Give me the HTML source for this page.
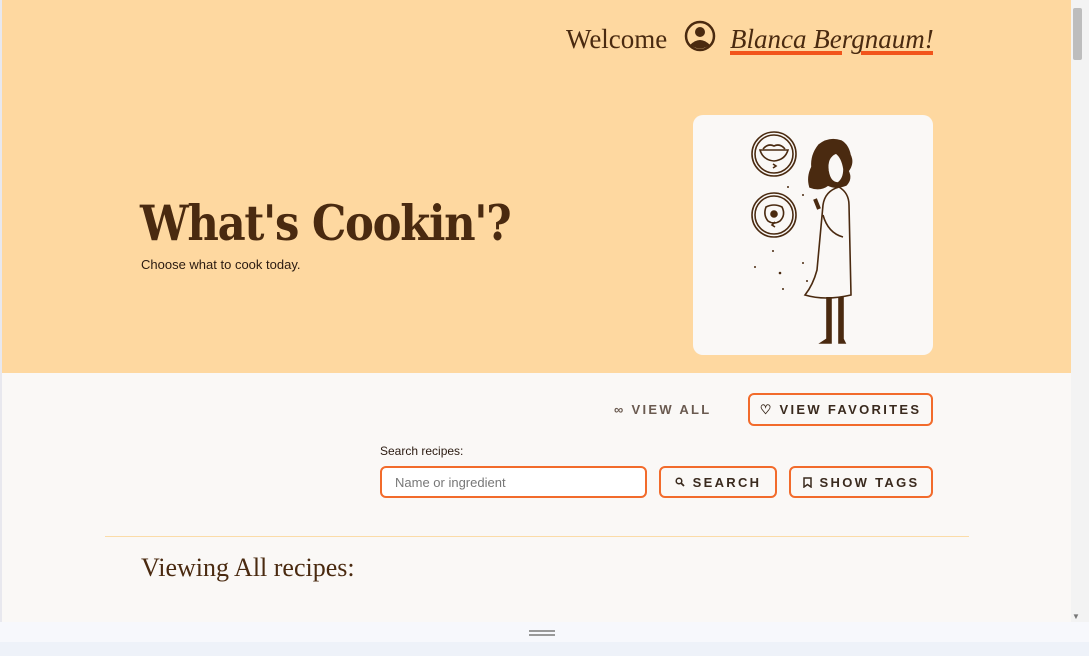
<!DOCTYPE html>
<html><head><style>
*{margin:0;padding:0;box-sizing:border-box}
body{width:1089px;height:656px;overflow:hidden;background:#eef2f9;font-family:"Liberation Sans",sans-serif;position:relative}
.page{position:absolute;left:0;top:0;width:1071px;height:622px;background:#faf8f6;border-left:2px solid #e8e8ee}
.hero{position:absolute;left:2px;top:0;width:1069px;height:373px;background:#fed8a0}
.sb{position:absolute;left:1071px;top:0;width:18px;height:622px;background:#f3f3f3}
.thumb{position:absolute;left:1073px;top:8px;width:9px;height:52px;background:#bdbdbd;border-radius:2px}
.abs{position:absolute;white-space:nowrap}
.serif{font-family:"DejaVu Serif","Liberation Serif",serif;color:#4a2a10}
.btn{position:absolute;border:2px solid #f26b2b;border-radius:6px;font-weight:bold;font-size:13px;letter-spacing:2.3px;color:#3a2a1e;display:flex;align-items:center;justify-content:center;gap:8px}
</style></head><body>
<div class="page"></div>
<div class="hero"></div>
<div class="sb"></div><div class="thumb"></div>
<div class="abs" style="left:1072px;top:612px;font-size:8px;color:#777">▼</div>
<div class="abs serif" style="left:566px;top:24px;font-family:'Liberation Serif',serif;font-size:27px">Welcome</div>
<svg class="abs" style="left:684px;top:20px" width="32" height="32" viewBox="0 0 32 32"><circle cx="16" cy="16" r="14" fill="none" stroke="#4a2a10" stroke-width="2.5"/><circle cx="16" cy="12" r="5" fill="#4a2a10"/><path d="M6 25 Q16 15 26 25 Q16 32 6 25Z" fill="#4a2a10"/></svg>
<div class="abs" style="left:730px;top:24px;font-family:'Liberation Serif',serif;font-style:italic;font-size:27px;color:#4a2a10">Blanca Bergnaum!</div>
<div class="abs" style="left:730px;top:51px;width:112px;height:4px;background:#f2541b"></div>
<div class="abs" style="left:861px;top:51px;width:72px;height:4px;background:#f2541b"></div>
<div class="abs serif" style="left:140px;top:194px;font-size:49px;font-weight:bold;letter-spacing:-1.5px;transform:scaleX(0.885);transform-origin:0 0">What's Cookin'?</div>
<div class="abs" style="left:141px;top:257px;font-size:13px;color:#2a1a10">Choose what to cook today.</div>
<div class="abs" style="left:693px;top:115px;width:240px;height:240px;background:#faf8f6;border-radius:10px"></div>
<svg class="abs" style="left:693px;top:115px" width="240" height="240" viewBox="0 0 240 240" fill="none" stroke="#4a2a10" stroke-width="1.6">
<circle cx="81" cy="39" r="22"/><circle cx="81" cy="39" r="19"/>
<path d="M67 35 h28 q-3 10 -14 11 q-11 -1 -14 -11z"/><path d="M70 34 q5 -6 11 -3 q6 -3 11 3"/><path d="M80 49 l3 2 -3 2"/>
<circle cx="81" cy="100" r="22"/><circle cx="81" cy="100" r="19"/>
<path d="M73 92 q8 -4 16 0 q4 8 -2 14 q-6 4 -12 0 q-5 -6 -2 -14z"/><circle cx="81" cy="99" r="3" fill="#4a2a10"/><path d="M82 107 l-3 3 3 2"/>
<path d="M148 26 q-12 -4 -22 4 q-8 10 -7 22 q-5 10 -2 20 q10 4 18 -2 q8 4 18 0 q6 -6 2 -14 q6 -8 2 -16 q-2 -10 -9 -14z" fill="#4a2a10"/>
<path d="M143 38 q-10 4 -8 18 q2 12 10 12 q6 -4 6 -14 q-2 -12 -8 -16z" fill="#faf8f6"/>
<path d="M146 72 q-14 4 -16 18 l-6 65 q-4 15 -12 25 q20 6 46 0 l-2 -90 q0 -12 -10 -18z" fill="#faf8f6"/>
<path d="M130 100 q5 18 20 22"/><path d="M122 84 l4 10" stroke-width="4"/>
<path d="M134 182 l0 42 l-6 4 h10 l0 -46 M150 182 l0 42 l2 4 h-6 l0 -46" fill="#4a2a10"/>
<g fill="#4a2a10" stroke="none"><circle cx="95" cy="72" r="1"/><circle cx="110" cy="80" r="1"/><circle cx="80" cy="136" r="1"/><circle cx="62" cy="152" r="1"/><circle cx="87" cy="158" r="1.3"/><circle cx="110" cy="148" r="1"/><circle cx="90" cy="174" r="1"/><circle cx="114" cy="166" r="1"/></g>
</svg>
<div class="abs" style="left:614px;top:402px;font-size:13px;font-weight:bold;letter-spacing:2.3px;color:#6a5a50">∞ VIEW ALL</div>
<div class="btn" style="left:748px;top:393px;width:185px;height:33px">♡ VIEW FAVORITES</div>
<div class="abs" style="left:380px;top:444px;font-size:12px;color:#2a1a10">Search recipes:</div>
<div class="abs" style="left:380px;top:466px;width:267px;height:32px;border:2px solid #f26b2b;border-radius:6px;background:#fff;font-size:13px;color:#777;padding:7px 13px">Name or ingredient</div>
<div class="btn" style="left:659px;top:466px;width:118px;height:32px"><svg width="10" height="10" viewBox="0 0 10 10"><circle cx="4" cy="4" r="2.8" fill="none" stroke="#3a2a1e" stroke-width="1.5"/><path d="M6 6l3 3" stroke="#3a2a1e" stroke-width="1.8"/></svg>SEARCH</div>
<div class="btn" style="left:789px;top:466px;width:144px;height:32px"><svg width="9" height="11"><path d="M1 1h7v9l-3.5-2.5L1 10z" fill="none" stroke="#3a2a1e" stroke-width="1.5"/></svg>SHOW TAGS</div>
<div class="abs" style="left:105px;top:536px;width:864px;height:1px;background:#fbdca8"></div>
<div class="abs" style="left:141px;top:553px;font-family:'Liberation Serif',serif;font-size:26px;color:#4a2a10">Viewing All recipes:</div>
<div class="abs" style="left:0;top:622px;width:1089px;height:20px;background:#f7f8fc"></div>
<div class="abs" style="left:529px;top:630px;width:26px;height:2px;background:#999"></div>
<div class="abs" style="left:529px;top:634px;width:26px;height:2px;background:#999"></div>
</body></html>
